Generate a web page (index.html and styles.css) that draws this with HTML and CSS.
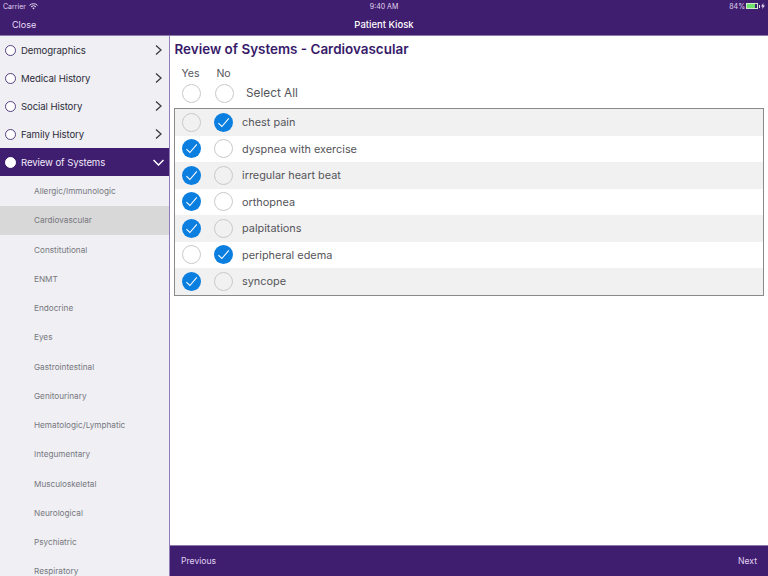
FILE: index.html
```html
<!DOCTYPE html>
<html lang="en">
<head>
    <meta charset="UTF-8">
    <meta name="viewport" content="width=device-width, initial-scale=1.0">
    <title>Patient Kiosk</title>
    <link rel="stylesheet" href="styles.css">
</head>
<body>
    <svg class="defs" width="0" height="0">
        <symbol id="tick" viewBox="0 0 20 20">
            <path d="M4.6 10.6 L8.3 14.2 L15.6 5.6" fill="none" stroke="#fff" stroke-width="1.1"/>
        </symbol>
        <symbol id="next" viewBox="0 0 7 10">
            <path d="M1 0.5 L6 5 L1 9.5" fill="none" stroke="currentColor" stroke-width="1.3"/>
        </symbol>
        <symbol id="down" viewBox="0 0 11 7">
            <path d="M0.5 1 L5.5 6 L10.5 1" fill="none" stroke="currentColor" stroke-width="1.5"/>
        </symbol>
    </svg>

    <header class="topbar">
        <div class="status">
            <div class="carrier">
                Carrier
                <svg width="9" height="7" viewBox="0 0 9 7">
                    <path d="M0.5 2.4 A5.6 5.6 0 0 1 8.5 2.4 M2 3.9 A3.5 3.5 0 0 1 7 3.9" fill="none" stroke="#e6dcf2" stroke-width="1"/>
                    <path d="M3.3 5.1 A1.7 1.7 0 0 1 5.7 5.1 L4.5 6.5 Z" fill="#e6dcf2"/>
                </svg>
            </div>
            <div class="time">9:40 AM</div>
            <div class="power">
                84%
                <span class="battery"><span class="battery-level"></span></span>
                <span class="battery-nub"></span>
                <svg class="bolt" width="4" height="6" viewBox="0 0 4 6">
                    <path d="M2.4 0 L0 3.4 H1.6 L1.2 6 L4 2.5 H2.3 Z" fill="#e6dcf2"/>
                </svg>
            </div>
        </div>
        <div class="nav">
            <div class="nav-close">Close</div>
            <div class="nav-title">Patient Kiosk</div>
            <div class="nav-side"></div>
        </div>
    </header>

    <div class="main">
        <aside class="sidebar">
            <div class="section"><span class="dot"></span><span class="section-name">Demographics</span><svg class="chev"><use href="#next"/></svg></div>
            <div class="section"><span class="dot"></span><span class="section-name">Medical History</span><svg class="chev"><use href="#next"/></svg></div>
            <div class="section"><span class="dot"></span><span class="section-name">Social History</span><svg class="chev"><use href="#next"/></svg></div>
            <div class="section"><span class="dot"></span><span class="section-name">Family History</span><svg class="chev"><use href="#next"/></svg></div>
            <div class="section active"><span class="dot"></span><span class="section-name">Review of Systems</span><svg class="chev-down"><use href="#down"/></svg></div>
            <div class="sub">Allergic/Immunologic</div>
            <div class="sub current">Cardiovascular</div>
            <div class="sub">Constitutional</div>
            <div class="sub">ENMT</div>
            <div class="sub">Endocrine</div>
            <div class="sub">Eyes</div>
            <div class="sub">Gastrointestinal</div>
            <div class="sub">Genitourinary</div>
            <div class="sub">Hematologic/Lymphatic</div>
            <div class="sub">Integumentary</div>
            <div class="sub">Musculoskeletal</div>
            <div class="sub">Neurological</div>
            <div class="sub">Psychiatric</div>
            <div class="sub">Respiratory</div>
        </aside>

        <main class="content">
            <h1 class="title">Review of Systems - Cardiovascular</h1>
            <div class="heads">
                <span class="head">Yes</span>
                <span class="head">No</span>
            </div>
            <div class="select-all">
                <span class="radio"></span>
                <span class="radio"></span>
                <span class="select-label">Select All</span>
            </div>
            <div class="list">
                <div class="row">
                    <span class="radio faint"></span>
                    <span class="radio on"><svg><use href="#tick"/></svg></span>
                    <span class="row-name">chest pain</span>
                </div>
                <div class="row">
                    <span class="radio on"><svg><use href="#tick"/></svg></span>
                    <span class="radio"></span>
                    <span class="row-name">dyspnea with exercise</span>
                </div>
                <div class="row">
                    <span class="radio on"><svg><use href="#tick"/></svg></span>
                    <span class="radio faint"></span>
                    <span class="row-name">irregular heart beat</span>
                </div>
                <div class="row">
                    <span class="radio on"><svg><use href="#tick"/></svg></span>
                    <span class="radio"></span>
                    <span class="row-name">orthopnea</span>
                </div>
                <div class="row">
                    <span class="radio on"><svg><use href="#tick"/></svg></span>
                    <span class="radio faint"></span>
                    <span class="row-name">palpitations</span>
                </div>
                <div class="row">
                    <span class="radio"></span>
                    <span class="radio on"><svg><use href="#tick"/></svg></span>
                    <span class="row-name">peripheral edema</span>
                </div>
                <div class="row">
                    <span class="radio on"><svg><use href="#tick"/></svg></span>
                    <span class="radio faint"></span>
                    <span class="row-name">syncope</span>
                </div>
            </div>
            <div class="footer">
                <span>Previous</span>
                <span>Next</span>
            </div>
        </main>
    </div>
</body>
</html>
```

FILE: styles.css
```css
* {
    box-sizing: border-box;
}
body {
    margin: 0;
    height: 576px;
    overflow: hidden;
    background-color: #fff;
    font-family: Inter, "Liberation Sans", sans-serif;
    display: flex;
    flex-direction: column;
}
.defs {
    display: none;
}
.topbar {
    height: 36px;
    flex: none;
    background-color: #3f1d6f;
    color: #fff;
    border-bottom: 1px solid #8d7bab;
}
.status {
    height: 12px;
    padding: 0 3px;
    display: flex;
    justify-content: space-between;
    align-items: center;
    font-size: 7px;
    color: #e0d6ee;
}
.carrier, .power {
    flex: 1;
    display: flex;
    align-items: center;
    gap: 3px;
}
.power {
    justify-content: flex-end;
    gap: 1px;
}
.battery {
    width: 12px;
    height: 6px;
    border: 1px solid #cfe9cf;
    display: flex;
}
.battery-level {
    width: 84%;
    background-color: #6fe36c;
}
.battery-nub {
    width: 1px;
    height: 3px;
    background-color: #e0d6ee;
}
.nav {
    height: 24px;
    padding: 0 12px;
    display: flex;
    align-items: center;
}
.nav-close {
    flex: 1;
    font-size: 9px;
    color: #e6dcf5;
}
.nav-title {
    font-weight: 500;
    font-size: 9.5px;
}
.nav-side {
    flex: 1;
}
.main {
    flex: 1;
    display: flex;
    min-height: 0;
}
.sidebar {
    width: 170px;
    flex: none;
    background-color: #efeff4;
    border-right: 1px solid #8f7cb8;
    overflow: hidden;
}
.section {
    height: 28px;
    padding: 0 7px 0 5px;
    display: flex;
    align-items: center;
    font-size: 9.6px;
    letter-spacing: -0.1px;
    color: #2c2c38;
}
.section-name {
    flex: 1;
    margin-left: 5px;
}
.dot {
    width: 11px;
    height: 11px;
    border: 1px solid #54407f;
    border-radius: 50%;
    background-color: #fff;
}
.chev {
    width: 7px;
    height: 10px;
    color: #3c3c44;
}
.chev-down {
    width: 11px;
    height: 7px;
    color: #fff;
}
.section.active {
    margin-bottom: 0.5px;
    background-color: #3f1d6f;
    color: #f1e9fb;
    padding-right: 5px;
}
.section.active .dot {
    border-color: #fff;
}
.sub {
    height: 29.25px;
    padding-left: 34px;
    display: flex;
    align-items: center;
    font-size: 8.2px;
    color: #77777d;
}
.sub.current {
    background-color: #d8d8d8;
}
.content {
    flex: 1;
    min-width: 0;
    display: flex;
    flex-direction: column;
}
.title {
    margin: 5px 0 0 4.5px;
    font-size: 13.45px;
    line-height: 17px;
    font-weight: 600;
    color: #371a69;
}
.heads {
    margin-top: 9px;
    padding-left: 4px;
    display: flex;
    font-size: 10.5px;
    line-height: 14px;
    color: #55555a;
}
.head {
    width: 33px;
    text-align: center;
}
.select-all {
    margin-top: 2px;
    padding-left: 12px;
    display: flex;
    align-items: center;
    gap: 14px;
    height: 20px;
}
.select-label {
    margin-left: -2px;
    font-size: 11.8px;
    color: #55555a;
}
.radio {
    width: 19px;
    height: 19px;
    flex: none;
    border: 1px solid #c9c9cc;
    border-radius: 50%;
    background-color: #fff;
}
.radio.faint {
    background-color: transparent;
}
.radio.on {
    border: 0;
    background-color: #0b7fe0;
}
.radio svg {
    display: block;
    width: 19px;
    height: 19px;
}
.list {
    margin: 5px 4px 0 4px;
    border: 1px solid #8a8a8a;
}
.row {
    height: 26.5px;
    padding-left: 7px;
    display: flex;
    align-items: center;
    gap: 13px;
}
.row:nth-child(odd) {
    background-color: #f1f1f1;
}
.row-name {
    margin-left: -4px;
    font-size: 10.9px;
    color: #55555a;
}
.footer {
    margin-top: auto;
    height: 31px;
    padding: 0 11px;
    display: flex;
    justify-content: space-between;
    align-items: center;
    background-color: #3f1d6f;
    border-top: 1px solid #8d7bab;
    font-size: 8.6px;
    color: #e0d3f2;
}
```
